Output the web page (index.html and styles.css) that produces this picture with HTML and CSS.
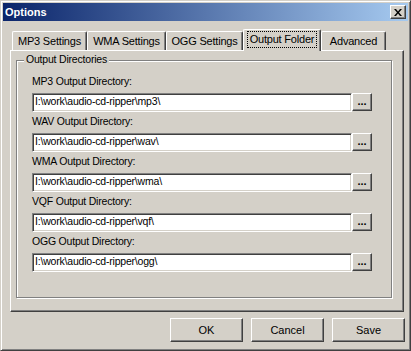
FILE: index.html
```html
<!DOCTYPE html>
<html lang="en">
  <head>
    <meta charset="UTF-8" />
    <meta name="viewport" content="width=device-width, initial-scale=1.0" />
    <title>Options</title>
    <link rel="stylesheet" href="styles.css">
  </head>

  <body>
    <div class="window">
      <!-- Title bar -->
      <div class="titlebar">
        <span class="title">Options</span>
        <div class="close-btn">
          <svg width="8" height="7" viewBox="0 0 8 7">
            <path d="M0 0h2l2 2.5 2-2.5h2l-3 3.5 3 3.5h-2l-2-2.5-2 2.5h-2l3-3.5z" fill="#000" />
          </svg>
        </div>
      </div>

      <!-- Tabs -->
      <div class="tabs">
        <div class="tab tab-mp3">MP3 Settings</div>
        <div class="tab tab-wma">WMA Settings</div>
        <div class="tab tab-ogg">OGG Settings</div>
        <div class="tab tab-out active"><span class="focus">Output Folder</span></div>
        <div class="tab tab-adv">Advanced</div>
      </div>

      <div class="panel">
        <div class="groupbox">
          <span class="legend">Output Directories</span>

          <div class="row">
            <label>MP3 Output Directory:</label>
            <div class="field">
              <input type="text" value="I:\work\audio-cd-ripper\mp3\" />
              <button class="browse">...</button>
            </div>
          </div>

          <div class="row">
            <label>WAV Output Directory:</label>
            <div class="field">
              <input type="text" value="I:\work\audio-cd-ripper\wav\" />
              <button class="browse">...</button>
            </div>
          </div>

          <div class="row">
            <label>WMA Output Directory:</label>
            <div class="field">
              <input type="text" value="I:\work\audio-cd-ripper\wma\" />
              <button class="browse">...</button>
            </div>
          </div>

          <div class="row">
            <label>VQF Output Directory:</label>
            <div class="field">
              <input type="text" value="I:\work\audio-cd-ripper\vqf\" />
              <button class="browse">...</button>
            </div>
          </div>

          <div class="row">
            <label>OGG Output Directory:</label>
            <div class="field">
              <input type="text" value="I:\work\audio-cd-ripper\ogg\" />
              <button class="browse">...</button>
            </div>
          </div>
        </div>
      </div>

      <!-- Dialog buttons -->
      <div class="actions">
        <button class="btn">OK</button>
        <button class="btn">Cancel</button>
        <button class="btn">Save</button>
      </div>
    </div>
  </body>
</html>
```

FILE: styles.css
```css
/* General Styles */

body {
  font-family: "Liberation Sans", Arial, sans-serif;
  font-size: 10.5px;
  letter-spacing: -0.2px;
  margin: 0;
  padding: 0;
  background-color: #d4d0c8;
  color: #000;
}

.window {
  width: 411px;
  height: 351px;
  box-sizing: border-box;
  padding: 2px;
  border: 1px solid;
  border-color: #d4d0c8 #404040 #404040 #d4d0c8;
  box-shadow: inset 1px 1px #fff, inset -1px -1px #808080;
  background: #d4d0c8;
}
/* Title bar */

.titlebar {
  height: 18px;
  display: flex;
  align-items: center;
  justify-content: space-between;
  padding: 0 2px 0 2px;
  background: linear-gradient(to right, #0a246a, #a6caf0);
}

.title {
  color: white;
  font-size: 11px;
  font-weight: bold;
  letter-spacing: 0;
}

.close-btn {
  width: 16px;
  height: 14px;
  box-sizing: border-box;
  display: flex;
  align-items: center;
  justify-content: center;
  background: #d4d0c8;
  border: 1px solid;
  border-color: #fff #404040 #404040 #fff;
  box-shadow: inset -1px -1px #808080;
}
/* Tabs */

.tabs {
  display: flex;
  align-items: flex-end;
  height: 21px;
  margin: 8px 0 0 9px;
}

.tab {
  height: 19px;
  box-sizing: border-box;
  display: flex;
  align-items: center;
  justify-content: center;
  font-size: 11px;
  border-top: 1px solid #fff;
  border-left: 1px solid #fff;
  border-right: 1px solid #404040;
  border-radius: 2px 2px 0 0;
  box-shadow: inset -1px 0 #808080;
  background: #d4d0c8;
}

.tab-mp3 { width: 75px; }
.tab-wma { width: 79px; }
.tab-ogg { width: 77px; }
.tab-out { width: 78px; }
.tab-adv { width: 65px; }

.tab.active {
  height: 22px;
  margin-bottom: -1px;
  padding-bottom: 3px;
  z-index: 1;
}

.focus {
  outline: 1px dotted #000;
  padding: 1px 2px;
  line-height: 13px;
}
/* Panel */

.panel {
  width: 394px;
  height: 262px;
  box-sizing: border-box;
  margin-left: 7px;
  padding: 9px 0 0 5px;
  border: 1px solid;
  border-color: #fff #404040 #404040 #fff;
  box-shadow: inset -1px -1px #808080;
}

.groupbox {
  position: relative;
  width: 376px;
  height: 238px;
  box-sizing: border-box;
  padding: 14px 0 0 15px;
  border: 1px solid #808080;
  box-shadow: inset 1px 1px #fff, 1px 1px #fff;
}

.legend {
  position: absolute;
  top: -8px;
  left: 7px;
  padding: 0 2px;
  line-height: 13px;
  background: #d4d0c8;
}

.row {
  margin-bottom: 3px;
}

.row label {
  display: block;
  line-height: 13px;
  margin-bottom: 5px;
}

.field {
  display: flex;
  align-items: flex-start;
}

.field input {
  width: 320px;
  height: 19px;
  box-sizing: border-box;
  margin: 0;
  padding: 0 2px 3px;
  font: inherit;
  letter-spacing: -0.2px;
  color: #000;
  background: #fff;
  border: 1px solid;
  border-color: #808080 #fff #fff #808080;
  box-shadow: inset 1px 1px #404040, inset -1px -1px #d4d0c8;
  outline: none;
}
/* Buttons */

.browse,
.btn {
  box-sizing: border-box;
  margin: 0;
  padding: 0;
  font: inherit;
  color: #000;
  background: #d4d0c8;
  border: 1px solid;
  border-color: #fff #404040 #404040 #fff;
  box-shadow: inset -1px -1px #808080;
}

.browse {
  width: 20px;
  height: 18px;
  font-size: 11px;
  font-weight: bold;
  letter-spacing: 0;
  line-height: 12px;
  padding-bottom: 2px;
}

.actions {
  display: flex;
  justify-content: flex-end;
  gap: 8px;
  margin-top: 6px;
  padding-right: 3px;
}

.btn {
  width: 73px;
  height: 24px;
  font-size: 11px;
}
```
